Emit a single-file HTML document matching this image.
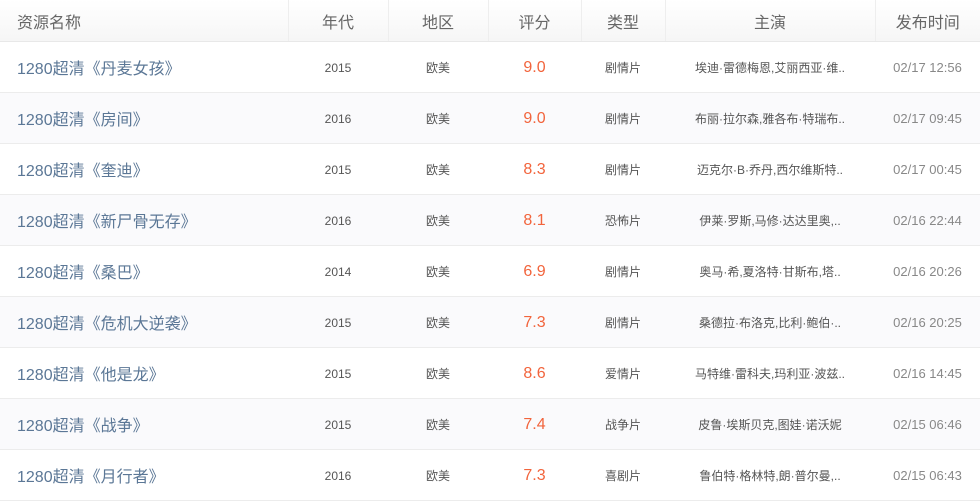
<!DOCTYPE html><html><head><meta charset="utf-8"><style>
body{margin:0;width:980px;height:497px;overflow:hidden;background:#fff;font-family:"Liberation Sans","Noto Sans CJK SC",sans-serif}
table{border-collapse:collapse;width:980px;table-layout:fixed}
th{height:41px;font-weight:normal;font-size:16px;color:#666;background:linear-gradient(#fff,#f6f6f6);border-left:1px solid #eee;border-bottom:1px solid #e8e8e8;padding:0}
th:first-child{border-left:none;text-align:left;padding-left:17px}
td{height:50px;border-bottom:1px solid #ececec;text-align:center;font-size:12px;color:#555;padding:0;white-space:nowrap;overflow:hidden}
tr:nth-child(odd) td{background:#fafafc}
td.n{text-align:left;padding-left:17px;font-size:16px;color:#5b7796}
td.s{font-size:16px;color:#f2643c;padding-top:2px;height:48px}
td.y{padding-top:2px;height:48px}
td.t{color:#888;font-size:13px}
</style></head><body><table>
<colgroup><col style="width:288px"><col style="width:100px"><col style="width:100px"><col style="width:93px"><col style="width:84px"><col style="width:210px"><col style="width:105px"></colgroup>
<tr><th>资源名称</th><th>年代</th><th>地区</th><th>评分</th><th>类型</th><th>主演</th><th>发布时间</th></tr>
<tr><td class="n">1280超清《丹麦女孩》</td><td class="y">2015</td><td>欧美</td><td class="s">9.0</td><td>剧情片</td><td>埃迪·雷德梅恩,艾丽西亚·维..</td><td class="t">02/17 12:56</td></tr>
<tr><td class="n">1280超清《房间》</td><td class="y">2016</td><td>欧美</td><td class="s">9.0</td><td>剧情片</td><td>布丽·拉尔森,雅各布·特瑞布..</td><td class="t">02/17 09:45</td></tr>
<tr><td class="n">1280超清《奎迪》</td><td class="y">2015</td><td>欧美</td><td class="s">8.3</td><td>剧情片</td><td>迈克尔·B·乔丹,西尔维斯特..</td><td class="t">02/17 00:45</td></tr>
<tr><td class="n">1280超清《新尸骨无存》</td><td class="y">2016</td><td>欧美</td><td class="s">8.1</td><td>恐怖片</td><td>伊莱·罗斯,马修·达达里奥,..</td><td class="t">02/16 22:44</td></tr>
<tr><td class="n">1280超清《桑巴》</td><td class="y">2014</td><td>欧美</td><td class="s">6.9</td><td>剧情片</td><td>奥马·希,夏洛特·甘斯布,塔..</td><td class="t">02/16 20:26</td></tr>
<tr><td class="n">1280超清《危机大逆袭》</td><td class="y">2015</td><td>欧美</td><td class="s">7.3</td><td>剧情片</td><td>桑德拉·布洛克,比利·鲍伯·..</td><td class="t">02/16 20:25</td></tr>
<tr><td class="n">1280超清《他是龙》</td><td class="y">2015</td><td>欧美</td><td class="s">8.6</td><td>爱情片</td><td>马特维·雷科夫,玛利亚·波兹..</td><td class="t">02/16 14:45</td></tr>
<tr><td class="n">1280超清《战争》</td><td class="y">2015</td><td>欧美</td><td class="s">7.4</td><td>战争片</td><td>皮鲁·埃斯贝克,图娃·诺沃妮</td><td class="t">02/15 06:46</td></tr>
<tr><td class="n">1280超清《月行者》</td><td class="y">2016</td><td>欧美</td><td class="s">7.3</td><td>喜剧片</td><td>鲁伯特·格林特,朗·普尔曼,..</td><td class="t">02/15 06:43</td></tr>
</table></body></html>
